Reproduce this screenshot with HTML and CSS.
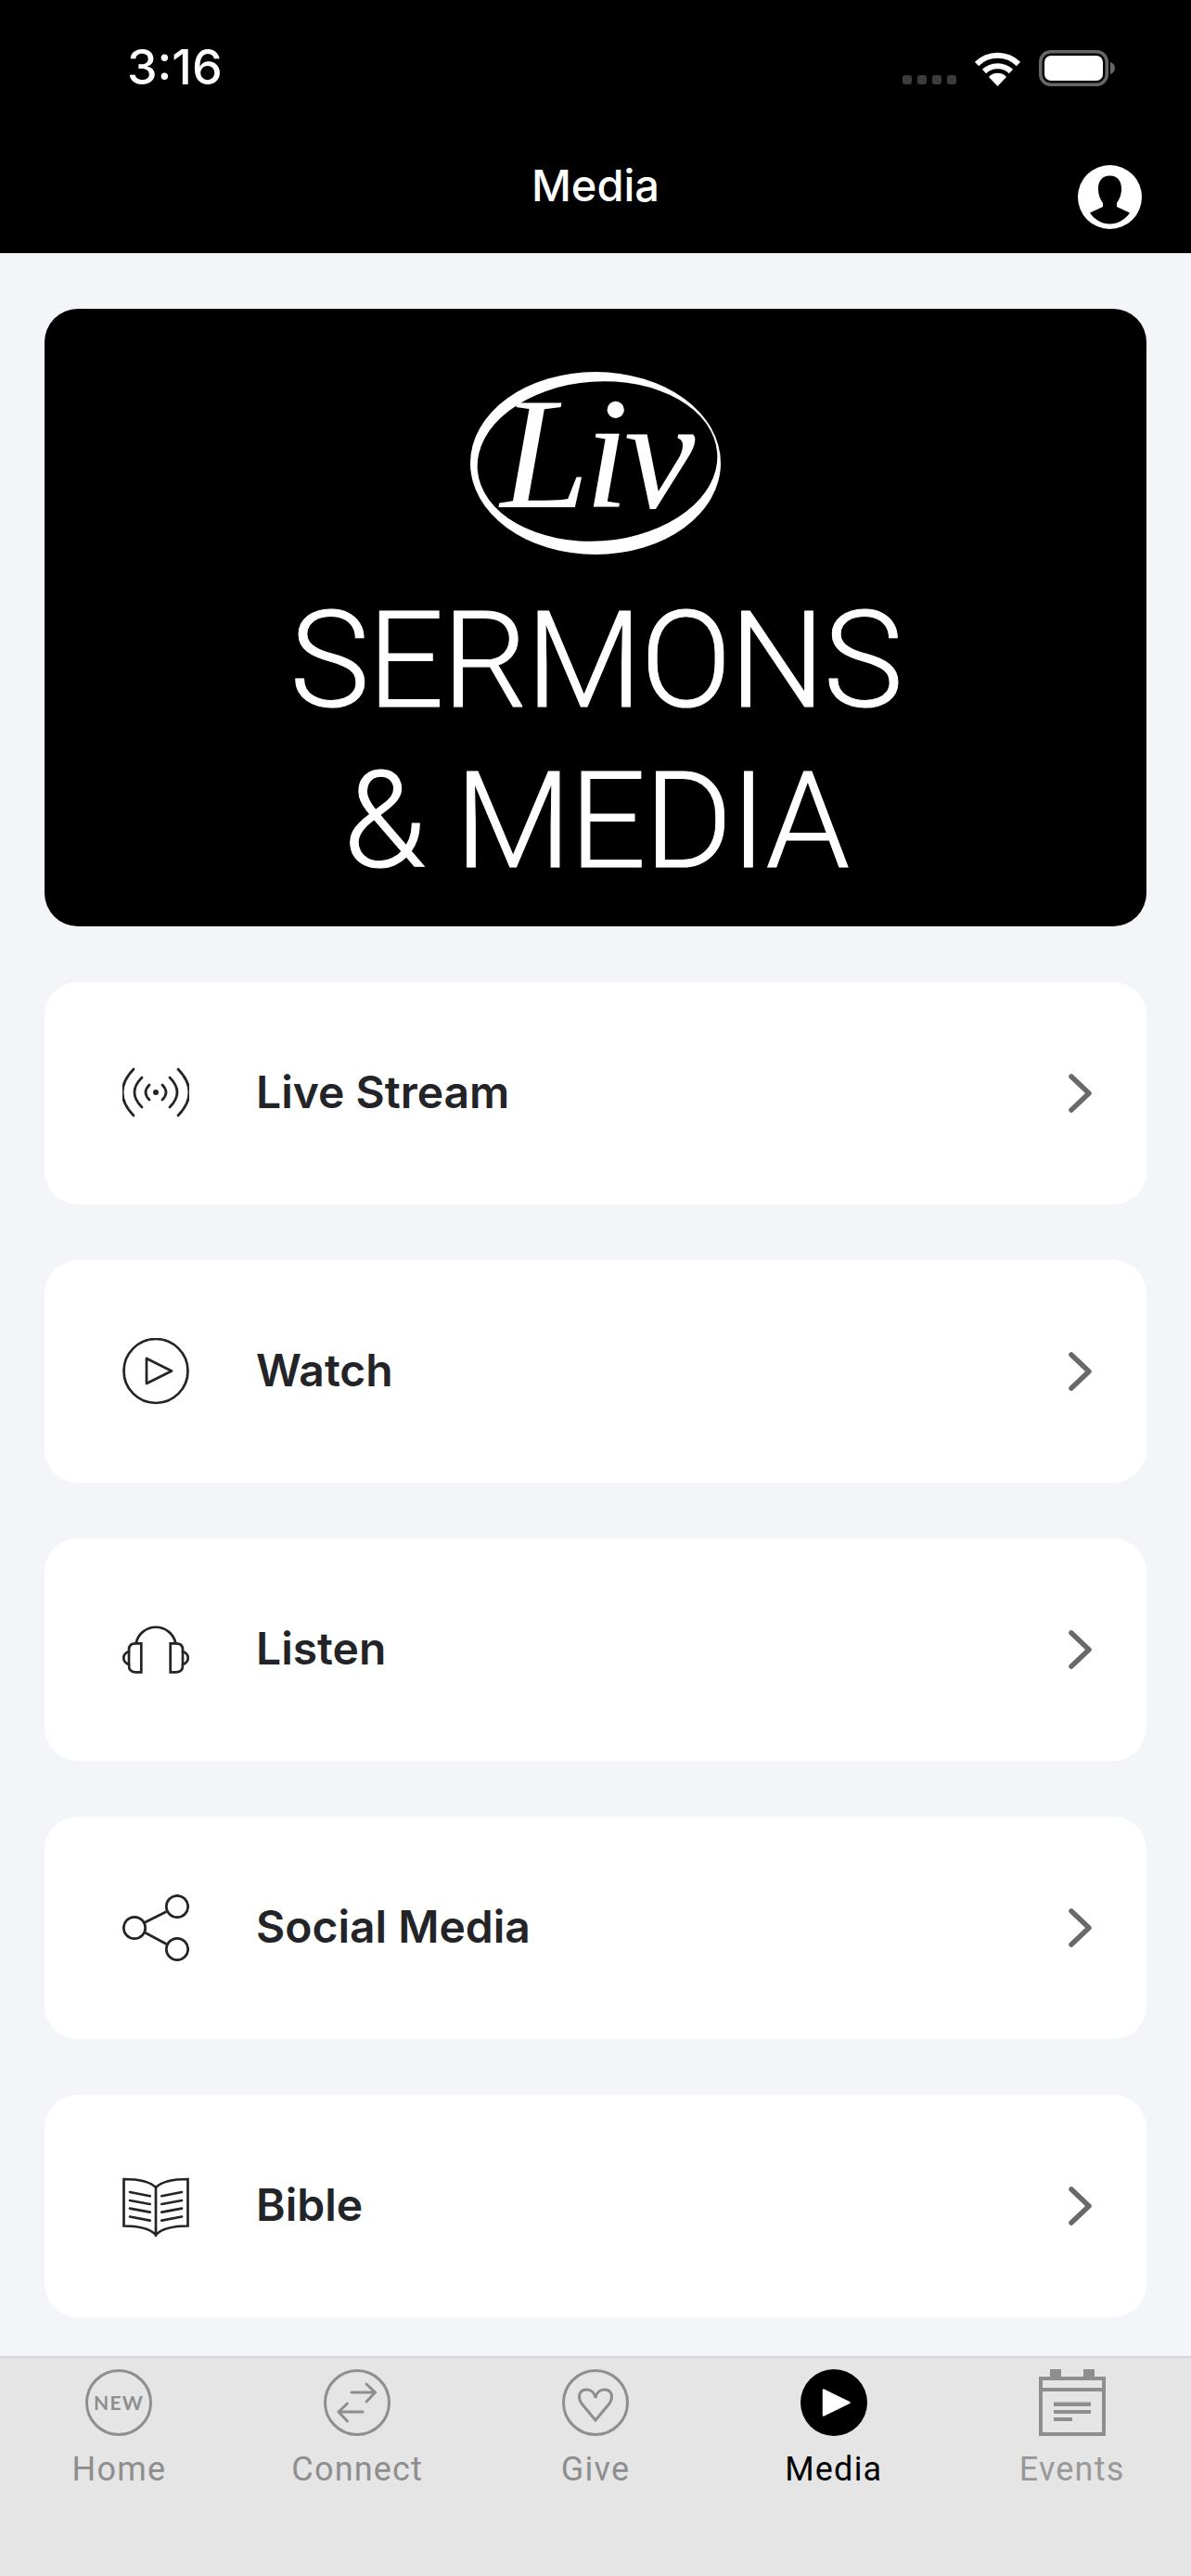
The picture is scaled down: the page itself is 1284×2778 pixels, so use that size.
FILE: index.html
```html
<!DOCTYPE html>
<html lang="en">
<head>
    <meta charset="UTF-8">
    <meta name="viewport" content="width=device-width, initial-scale=1.0">
    <title>Media</title>
    <link rel="stylesheet" href="styles.css">
</head>
<body>
    <!-- Status bar and title -->
    <header class="header">
        <div class="status-bar">
            <span class="time">3:16</span>
            <div class="status-icons">
                <div class="signal"><i></i><i></i><i></i><i></i></div>
                <svg class="wifi" width="51" height="37" viewBox="0 0 51 37">
                    <path d="M3 13A32 32 0 0 1 48 13M11 21A21 21 0 0 1 40 21" fill="none" stroke="#fff" stroke-width="6"/>
                    <path d="M25.5 37L16 27A13 13 0 0 1 35 27Z" fill="#fff"/>
                </svg>
                <svg class="battery" width="82" height="39" viewBox="0 0 82 39">
                    <rect x="1.75" y="1.75" width="71.5" height="35.5" rx="11" fill="none" stroke="#666" stroke-width="3.5"/>
                    <rect x="6" y="6" width="63" height="27" rx="7" fill="#fff"/>
                    <path d="M77 13C80 14 82 16.500 82 19.500C82 22.500 80 25 77 26Z" fill="#666"/>
                </svg>
            </div>
        </div>
        <div class="nav-row">
            <h1 class="nav-title">Media</h1>
            <svg class="avatar" width="69" height="69" viewBox="0 0 69 69">
                <circle cx="34.500" cy="34.500" r="34.500" fill="#fff"/>
                <path d="M34.500 11.500C25 11.500 21.500 19 22 27C22.500 34 25 38 27 41V45L13 51.500C18 59 26 63.500 34.500 63.500C43 63.500 51 59 56 51.500L42 45V41C44 38 46.500 34 47 27C47.500 19 44 11.500 34.500 11.500Z" fill="#000"/>
            </svg>
        </div>
    </header>

    <main class="content">
        <!-- Banner -->
        <section class="banner">
            <div class="logo">
                <svg width="270" height="197" viewBox="0 0 270 197">
                    <ellipse cx="135" cy="98.500" rx="135" ry="98.500" fill="#fff"/>
                    <ellipse cx="137" cy="96.500" rx="129.500" ry="86" fill="#000" transform="rotate(-4 137 96.500)"/>
                </svg>
                <span class="logo-text">Liv</span>
            </div>
            <div class="banner-line first">SERMONS</div>
            <div class="banner-line">&amp; MEDIA</div>
        </section>

        <!-- Menu -->
        <a class="card" href="#">
            <svg class="card-icon" width="72" height="72" viewBox="0 0 72 72">
                <circle cx="36" cy="35" r="3" fill="#232428" stroke="none"/>
                <path d="M29 27Q21 35 29 43M21 19Q5 35 21 51M12 10Q-12 35 12 60M43 27Q51 35 43 43M51 19Q67 35 51 51M60 10Q84 35 60 60"/>
            </svg>
            <span class="card-label">Live Stream</span>
            <svg class="chevron" width="28" height="44" viewBox="0 0 28 44"><path d="M5 4L24 22L5 40"/></svg>
        </a>
        <a class="card" href="#">
            <svg class="card-icon" width="72" height="72" viewBox="0 0 72 72">
                <circle cx="36" cy="35.500" r="34.500"/>
                <path d="M26 22V49L53 35.500Z" stroke-linejoin="round"/>
            </svg>
            <span class="card-label">Watch</span>
            <svg class="chevron" width="28" height="44" viewBox="0 0 28 44"><path d="M5 4L24 22L5 40"/></svg>
        </a>
        <a class="card" href="#">
            <svg class="card-icon" width="72" height="72" viewBox="0 0 72 72">
                <path d="M14.700 29A21.700 21.300 0 0 1 57.300 29"/>
                <path d="M20.300 29.300H14Q7 29.300 7 36V53Q7 60.300 14 60.300H20.300ZM51.700 29.300H58Q65 29.300 65 36V53Q65 60.300 58 60.300H51.700Z"/>
                <path d="M7 38Q1.300 40 1.300 45Q1.300 50 7 52M65 38Q70.700 40 70.700 45Q70.700 50 65 52"/>
            </svg>
            <span class="card-label">Listen</span>
            <svg class="chevron" width="28" height="44" viewBox="0 0 28 44"><path d="M5 4L24 22L5 40"/></svg>
        </a>
        <a class="card" href="#">
            <svg class="card-icon" width="72" height="72" viewBox="0 0 72 72">
                <circle cx="59" cy="13" r="11.700"/>
                <circle cx="13" cy="36" r="11.700"/>
                <circle cx="59" cy="59" r="11.700"/>
                <path d="M25 29.800L46.500 19M25 41.500L46.500 53"/>
            </svg>
            <span class="card-label">Social Media</span>
            <svg class="chevron" width="28" height="44" viewBox="0 0 28 44"><path d="M5 4L24 22L5 40"/></svg>
        </a>
        <a class="card" href="#">
            <svg class="card-icon" width="72" height="72" viewBox="0 0 72 72">
                <path d="M1.500 7C14 7 28 8 36 16C44 8 58 7 70.500 7V57.500C58 57.500 44 59 36 67C28 59 14 57.500 1.500 57.500ZM36 16V68"/>
                <path d="M8 21L29.700 25.300M8 30L29.700 34M8 38.700L29.700 42.700M8 47.500L29.700 51.700M64 21L42.300 25.300M64 30L42.300 34M64 38.700L42.300 42.700M64 47.500L42.300 51.700"/>
            </svg>
            <span class="card-label">Bible</span>
            <svg class="chevron" width="28" height="44" viewBox="0 0 28 44"><path d="M5 4L24 22L5 40"/></svg>
        </a>
    </main>

    <!-- Bottom tabs -->
    <nav class="tabs">
        <a class="tab" href="#">
            <svg class="tab-icon" width="72" height="72" viewBox="0 0 72 72">
                <circle cx="36" cy="36" r="34.500"/>
                <text class="new-text" x="36" y="43.500">NEW</text>
            </svg>
            <span>Home</span>
        </a>
        <a class="tab" href="#">
            <svg class="tab-icon" width="72" height="72" viewBox="0 0 72 72">
                <circle cx="36" cy="36" r="34.500"/>
                <path d="M30 25H55M46 16L55.500 25L46 35M42 46H16M25.500 37L16 46L25.500 56"/>
            </svg>
            <span>Connect</span>
        </a>
        <a class="tab" href="#">
            <svg class="tab-icon" width="72" height="72" viewBox="0 0 72 72">
                <circle cx="36" cy="36" r="34.500"/>
                <path d="M36 55L21 37C16 29 19 22 26.500 22C31 22 35 25 36 31C37 25 41 22 45.500 22C53 22 56 29 51 37Z"/>
            </svg>
            <span>Give</span>
        </a>
        <a class="tab active" href="#">
            <svg class="tab-icon" width="72" height="72" viewBox="0 0 72 72">
                <circle cx="36" cy="36" r="36" fill="#000" stroke="none"/>
                <path d="M25 22.500V49.500L52.500 36Z" fill="#fff" stroke="#fff" stroke-width="2.500" stroke-linejoin="round"/>
            </svg>
            <span>Media</span>
        </a>
        <a class="tab light" href="#">
            <svg class="tab-icon" width="72" height="72" viewBox="0 0 72 72">
                <path class="solid" d="M12 0H24V8H12ZM48 0H60V8H48Z"/>
                <path d="M2 10H70V70H2ZM2 22H70"/>
                <path class="solid" d="M16 35.500H56V40H16ZM16 44H56V48H16ZM16 52H36V56H16Z"/>
            </svg>
            <span>Events</span>
        </a>
    </nav>
</body>
</html>
```

FILE: styles.css
```css
body {
    margin: 0;
    width: 1284px;
    height: 2778px;
    display: flex;
    flex-direction: column;
    overflow: hidden;
    background-color: #f4f5f9;
    font-family: Inter, "Liberation Sans", sans-serif;
}

a {
    text-decoration: none;
    color: inherit;
}

/* Black header */
.header {
    height: 273px;
    flex-shrink: 0;
    box-sizing: border-box;
    padding-top: 53px;
    background-color: #000;
    color: #fff;
}

.status-bar {
    height: 40px;
    display: flex;
    justify-content: space-between;
    align-items: center;
    padding: 0 82px 0 137px;
}

.time {
    font-size: 52px;
    font-weight: 500;
    line-height: 40px;
}

.status-icons {
    display: flex;
    align-items: flex-end;
    gap: 19px;
}

.signal {
    display: flex;
    gap: 6px;
    margin-bottom: 2px;
}

.signal i {
    width: 10px;
    height: 10px;
    border-radius: 3px;
    background-color: #3c3c3c;
}

.nav-row {
    display: flex;
    justify-content: center;
    align-items: flex-start;
    position: relative;
    margin-top: 85px;
}

.nav-title {
    margin: 0;
    font-size: 47px;
    font-weight: 500;
    line-height: 44px;
}

.avatar {
    position: absolute;
    top: 0;
    right: 53px;
}

/* Main list */
.content {
    flex: 1;
    display: flex;
    flex-direction: column;
    gap: 60px;
    padding: 60px 48px 0;
}

.banner {
    height: 666px;
    box-sizing: border-box;
    padding-top: 68px;
    display: flex;
    flex-direction: column;
    align-items: center;
    border-radius: 36px;
    background-color: #000;
    color: #fff;
}

.logo {
    position: relative;
    width: 270px;
    height: 197px;
}

.logo svg {
    display: block;
}

/* Sits on the ring of the logo */
.logo-text {
    position: absolute;
    top: 0;
    left: 0;
    width: 100%;
    text-align: center;
    font-family: "Liberation Serif", serif;
    font-style: italic;
    font-size: 172px;
    line-height: 176px;
    letter-spacing: -5px;
}

.banner-line {
    font-family: Roboto, sans-serif;
    font-weight: 300;
    font-size: 145px;
    line-height: 173px;
    letter-spacing: -2px;
    white-space: nowrap;
    -webkit-text-stroke: 1px #fff;
}

.banner-line.first {
    margin-top: 28px;
}

.card {
    height: 240px;
    flex-shrink: 0;
    display: flex;
    align-items: center;
    box-sizing: border-box;
    padding: 0 58px 0 84px;
    border-radius: 36px;
    background-color: #fff;
    color: #232428;
}

.card-icon {
    flex-shrink: 0;
    fill: none;
    stroke: #232428;
    stroke-width: 2.700;
    stroke-linecap: round;
}

.card-label {
    flex: 1;
    margin-left: 72px;
    padding-bottom: 3px;
    font-size: 48px;
    font-weight: 600;
}

.chevron {
    fill: none;
    stroke: #69696c;
    stroke-width: 5.500;
    stroke-linecap: round;
    stroke-linejoin: round;
}

/* Tabs */
.tabs {
    height: 237px;
    flex-shrink: 0;
    display: grid;
    grid-template-columns: repeat(5, 1fr);
    box-sizing: border-box;
    padding-top: 12px;
    border-top: 2px solid #d4d4d6;
    background-color: #e5e5e5;
    font-family: Roboto, sans-serif;
    color: #8e8e8e;
}

.tab {
    display: flex;
    flex-direction: column;
    align-items: center;
    font-size: 36px;
    line-height: 42px;
    letter-spacing: 1.200px;
}

.tab span {
    margin-top: 15px;
}

.tab.active {
    color: #000;
}

.tab.light {
    color: #999;
}

.tab-icon {
    fill: none;
    stroke: #8e8e8e;
    stroke-width: 3;
    stroke-linecap: round;
}

.tab.light .tab-icon {
    stroke-width: 4;
    stroke-linecap: butt;
}

.tab-icon .solid {
    fill: #8e8e8e;
    stroke: none;
}

.new-text {
    font-family: Lato, sans-serif;
    font-weight: 700;
    font-size: 21px;
    text-anchor: middle;
    fill: #8e8e8e;
    stroke: none;
}
```
